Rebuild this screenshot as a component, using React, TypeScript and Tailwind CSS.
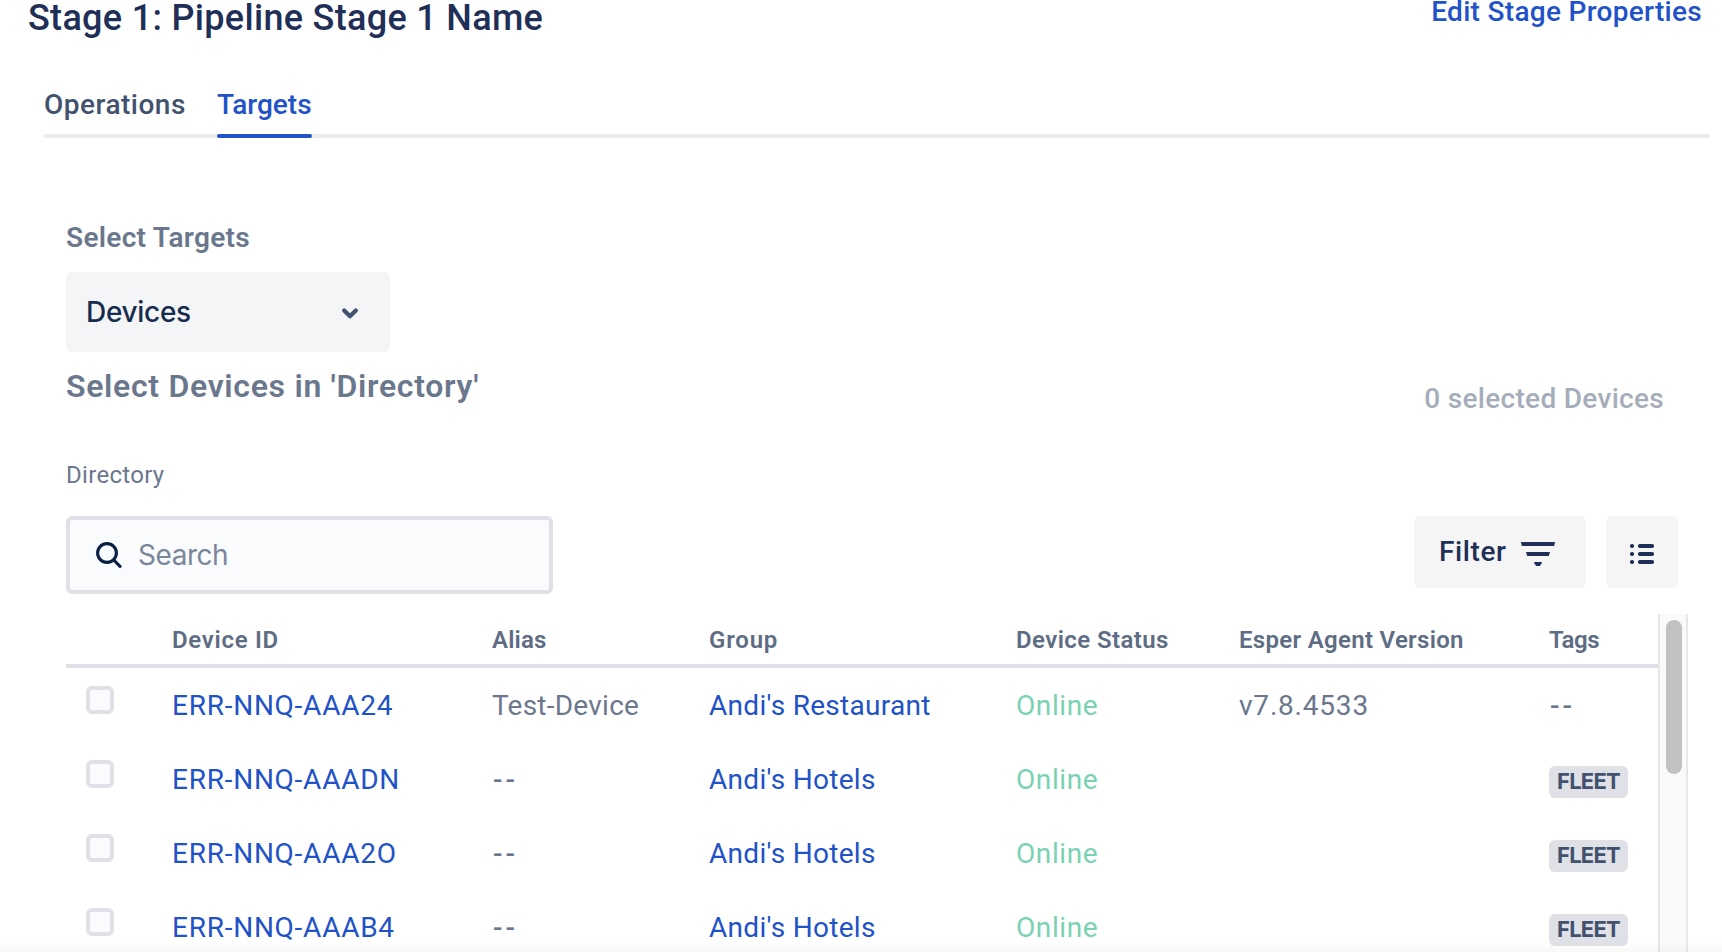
type Device = {
  id: string;
  alias: string;
  group: string;
  version: string;
  tag: string | null;
};

const devices: Device[] = [
  { id: "ERR-NNQ-AAA24", alias: "Test-Device", group: "Andi's Restaurant", version: "v7.8.4533", tag: null },
  { id: "ERR-NNQ-AAADN", alias: "--", group: "Andi's Hotels", version: "", tag: "FLEET" },
  { id: "ERR-NNQ-AAA2O", alias: "--", group: "Andi's Hotels", version: "", tag: "FLEET" },
  { id: "ERR-NNQ-AAAB4", alias: "--", group: "Andi's Hotels", version: "", tag: "FLEET" },
];

const columns = "grid grid-cols-[106px_320px_217px_307px_223px_310px_109px] items-center";

function Dashes() {
  return <span className="ml-px font-medium tracking-[3px]">--</span>;
}

function Header() {
  return (
    <header className="flex items-start justify-between pl-7 pr-5">
      <h1 className="text-4xl leading-9 font-medium tracking-[0.31px] text-[#1f2f57]">
        Stage 1: Pipeline Stage 1 Name
      </h1>
      <a className="text-[28px] leading-6 font-medium tracking-[0.3px] text-[#2152c8]">
        Edit Stage Properties
      </a>
    </header>
  );
}

function Tabs() {
  return (
    <nav className="mt-[53px] ml-11 mr-3">
      <div className="flex gap-8 text-[28px] leading-8 font-medium">
        <span className="w-[141px] tracking-[0.5px] text-[#42526e]">Operations</span>
        <span className="w-[95px] text-[#2152c8]">Targets</span>
      </div>
      <div className="mt-[13px] h-1 rounded-xs bg-[#ebecee] pl-[173px]">
        <div className="h-1 w-[95px] rounded-xs bg-[#2152c8]" />
      </div>
    </nav>
  );
}

function TargetPicker() {
  return (
    <>
      <h2 className="mt-[84px] text-[28px] leading-8 font-semibold tracking-[0.3px] text-[#6b778c]">
        Select Targets
      </h2>
      <button className="mt-[18px] flex h-20 w-[324px] items-center justify-between rounded-md bg-[#f4f5f7] pl-5 pr-8">
        <span className="font-['Inter',sans-serif] text-[28px] font-medium tracking-[-0.3px] text-[#172b4d]">
          Devices
        </span>
        <svg width="16" height="12" viewBox="0 0 16 12" fill="none" className="mt-[3px]">
          <path d="M2.2 2.5 8 8.3l5.800-5.800" stroke="#42526e" strokeWidth="4.2" strokeLinecap="round" strokeLinejoin="round" />
        </svg>
      </button>
      <div className="flex h-[107px] items-start justify-between pr-[58px]">
        <h3 className="mt-3.5 text-[32px] leading-10 font-semibold tracking-[0.68px] text-[#6b778c]">
          Select Devices in 'Directory'
        </h3>
        <span className="mt-[27px] text-[28px] leading-10 font-medium tracking-[0.3px] text-[#a5adba]">
          0 selected Devices
        </span>
      </div>
    </>
  );
}

function Toolbar() {
  return (
    <div className="mt-[25px] flex items-start justify-between pr-11">
      <div className="flex h-[78px] w-[487px] items-center rounded-md border-4 border-[#dfe1e6] bg-[#fafbfd] pl-[26px]">
        <svg width="26" height="26" viewBox="0 0 26 26" fill="none">
          <circle cx="11" cy="11" r="9.4" stroke="#091e42" strokeWidth="3.1" />
          <path d="m17.8 18 6.2 6.4" stroke="#091e42" strokeWidth="3.1" strokeLinecap="round" />
        </svg>
        <span className="ml-[16px] font-['Inter',sans-serif] text-[28px] tracking-[-0.45px] text-[#7a869a]">
          Search
        </span>
      </div>
      <div className="flex gap-5">
        <button className="flex h-[72px] w-[172px] items-center rounded-md bg-[#f5f5f5] pl-[25px] text-[28px] font-medium tracking-[0.6px] text-[#1f2f57]">
          <span className="w-[82px] text-left">Filter</span>
          <svg width="34" height="24" viewBox="0 0 34 24" fill="#1f2f57" className="mt-1">
            <path d="M0 0h34l-.8 4H.8z" />
            <path d="M5 10h24l-1.200 4H6.200z" />
            <path d="M13 20h8q-.4 2.500-2.200 4h-3.600q-1.800-1.500-2.200-4z" />
          </svg>
        </button>
        <button className="flex h-[72px] w-[72px] items-center justify-center rounded-md bg-[#f5f5f5]">
          <svg width="24" height="20" viewBox="0 0 24 20" fill="#1f2f57" className="mt-1">
            {[0, 8, 16].map((y) => (
              <g key={y}>
                <rect x="0" y={y} width="4" height="4" rx="1.7" />
                <rect x="8" y={y} width="16" height="4" rx="1.8" />
              </g>
            ))}
          </svg>
        </button>
      </div>
    </div>
  );
}

function DeviceRow({ device }: { device: Device }) {
  return (
    <div className={`${columns} h-[74px] pt-0.5 text-[28px] leading-8 text-[#6b778c]`}>
      <span className="mb-3 ml-5 h-7 w-7 rounded-md border-4 border-[#dfe1e6] bg-[#fafbfd]" />
      <a className="tracking-[0.75px] text-[#2152c8]">{device.id}</a>
      {device.alias === "--" ? <Dashes /> : <span className="tracking-[0.24px]">{device.alias}</span>}
      <a className="tracking-[0.3px] text-[#2152c8]">{device.group}</a>
      <span className="tracking-[0.6px] text-[#79d2b2]">Online</span>
      <span className="tracking-[0.8px]">{device.version}</span>
      {device.tag ? (
        <span className="mt-1 h-8 w-[79px] rounded-md bg-[#dfe1e6] pl-2 font-['Inter',sans-serif] text-[22px] leading-[30px] font-bold tracking-[-0.75px] text-[#42526e]">
          {device.tag}
        </span>
      ) : (
        <Dashes />
      )}
    </div>
  );
}

function DeviceTable() {
  return (
    <div className="mt-5 flex h-[338px]">
      <div className="w-[1592px] shrink-0">
        <div className={`${columns} h-[54px] border-b-4 border-[#dfe1e6] pt-0.5 text-2xl font-semibold text-[#5e6c84]`}>
          <span />
          <span className="tracking-[0.7px]">Device ID</span>
          <span className="tracking-[0.15px]">Alias</span>
          <span className="tracking-[0.8px]">Group</span>
          <span className="tracking-[0.41px]">Device Status</span>
          <span className="tracking-[0.3px]">Esper Agent Version</span>
          <span className="tracking-[-0.5px]">Tags</span>
        </div>
        {devices.map((device) => (
          <DeviceRow key={device.id} device={device} />
        ))}
      </div>
      <div className="h-full w-[30px] shrink-0 border-x-2 border-[#e8e8e8] bg-[#fafafa] pt-1.5 pl-1.5">
        <div className="h-[154px] w-4 rounded-full bg-[#c1c1c1]" />
      </div>
    </div>
  );
}

export default function App() {
  return (
    <div className="relative h-[952px] w-[1722px] overflow-hidden bg-white font-['Roboto',sans-serif] whitespace-nowrap">
      <Header />
      <Tabs />
      <main className="pl-[66px]">
        <TargetPicker />
        <p className="text-2xl leading-8 tracking-[0.3px] text-[#6b778c]">Directory</p>
        <Toolbar />
        <DeviceTable />
      </main>
      <div className="absolute inset-x-0 bottom-0 h-2.5 bg-linear-to-b from-transparent to-black/3" />
    </div>
  );
}
